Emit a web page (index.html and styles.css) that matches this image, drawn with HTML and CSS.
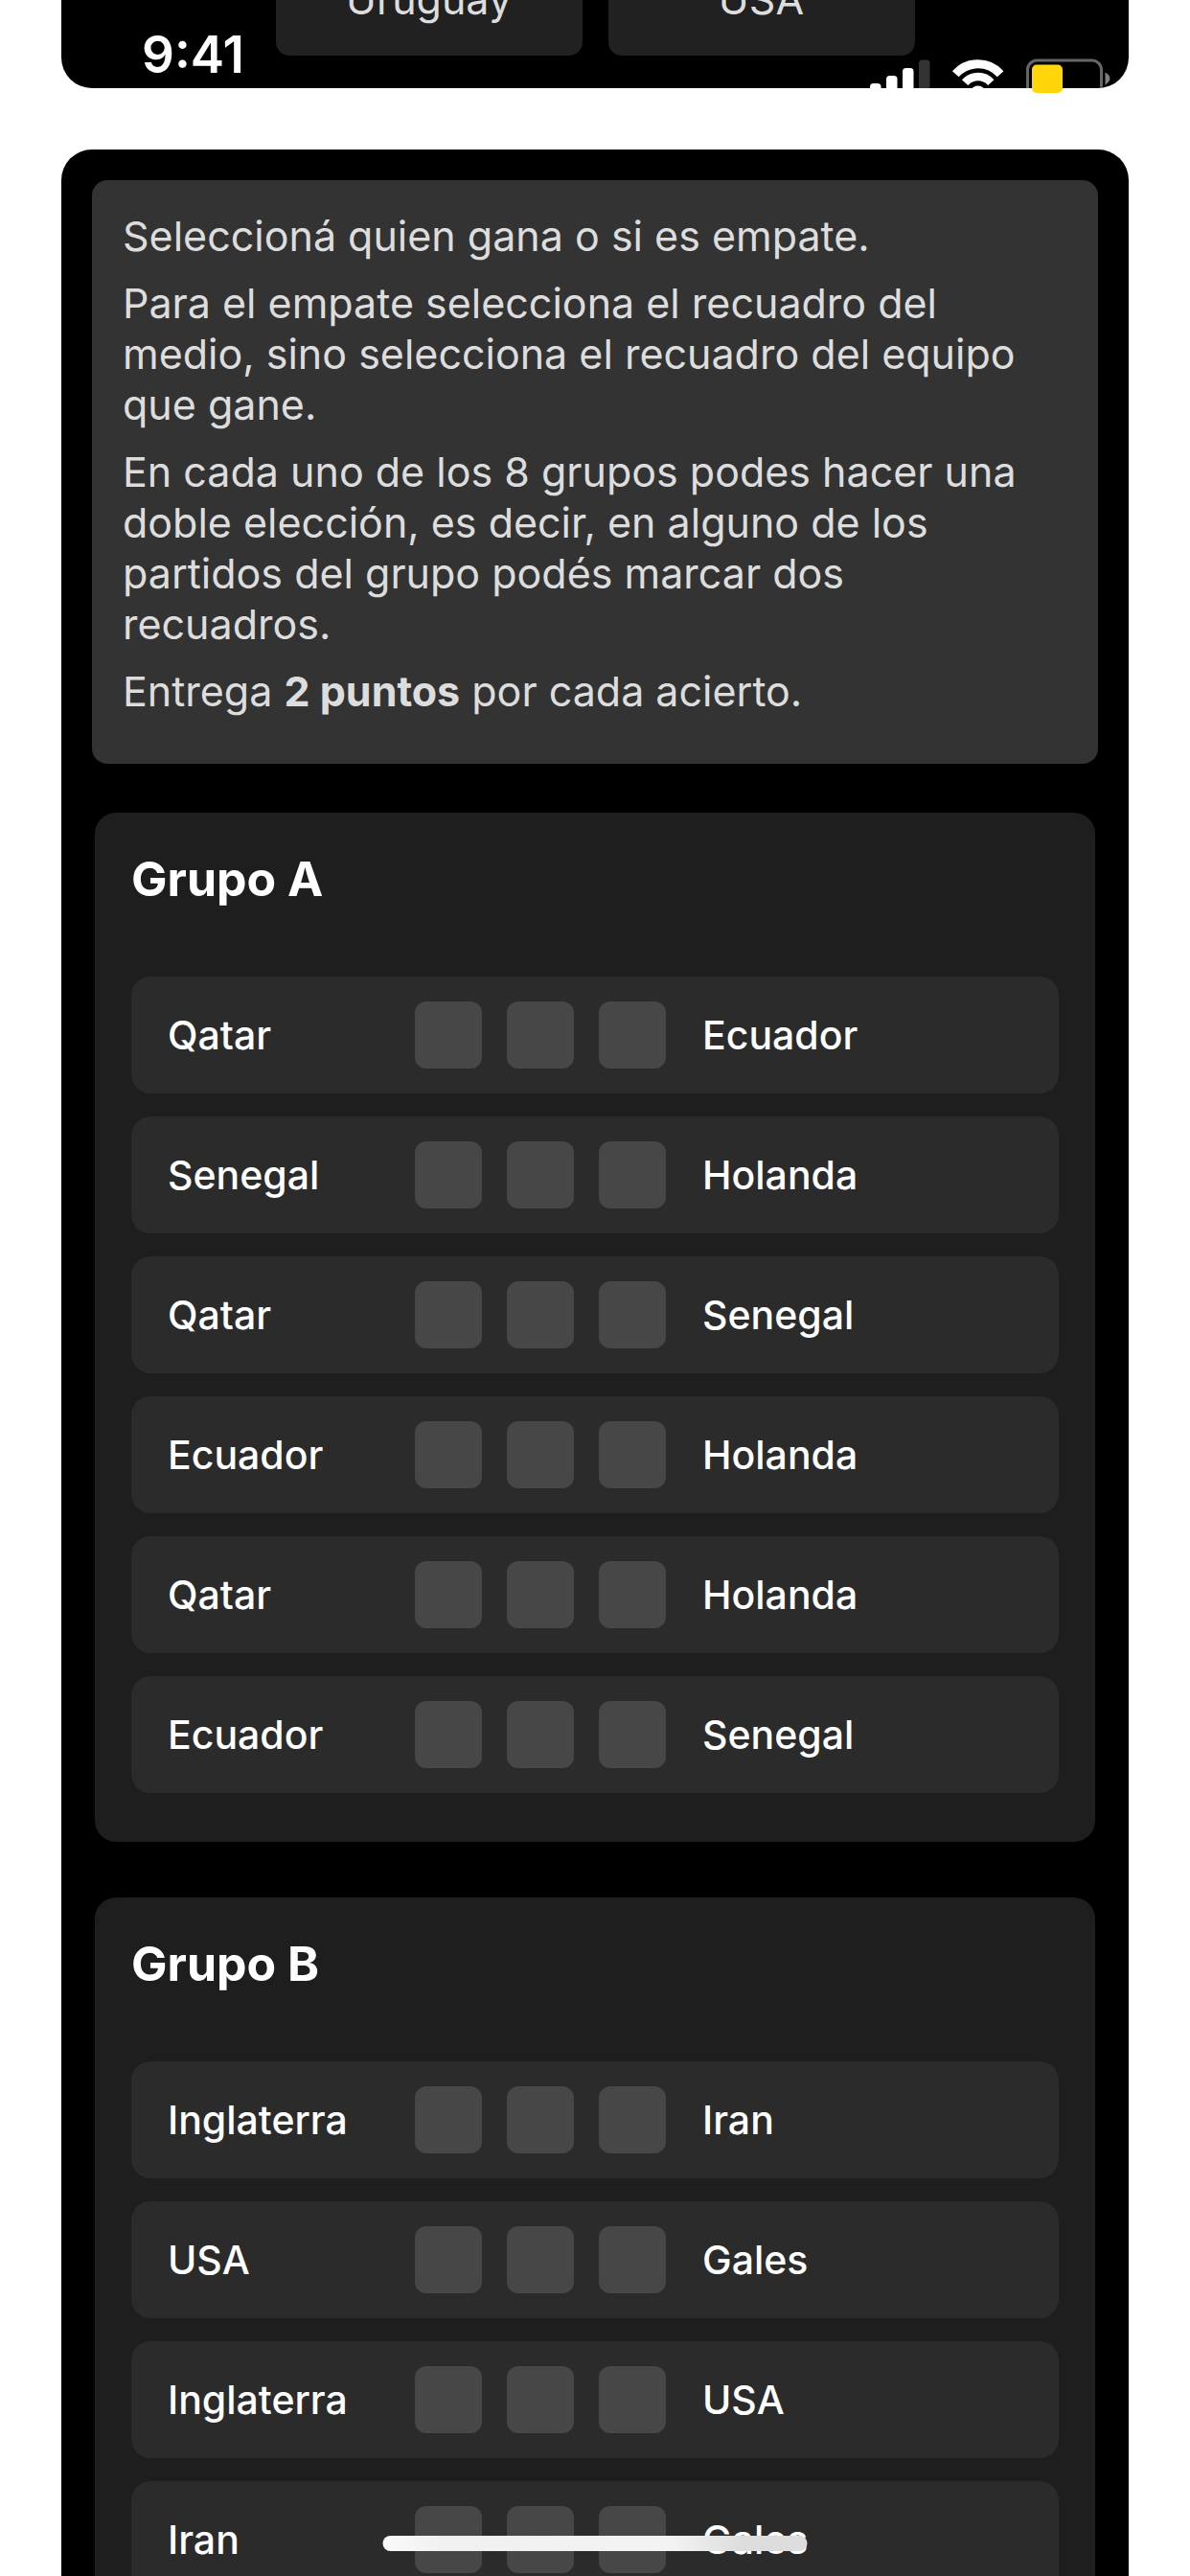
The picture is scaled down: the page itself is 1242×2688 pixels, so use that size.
FILE: index.html
```html
<!DOCTYPE html>
<html lang="es">

<head>
    <meta charset="UTF-8">
    <meta name="viewport" content="width=device-width, initial-scale=1.0">
    <title>Prode Mundial</title>
    <link rel="stylesheet" href="styles.css">
</head>

<body>
    <div class="status-bar">
        <span class="time">9:41</span>
        <svg class="status-icons" width="252" height="42" viewBox="0 0 252 42" aria-hidden="true">
            <clipPath id="panelEdge">
                <path d="M0 0H252V19Q248 30 236 31H0Z" />
            </clipPath>
            <g clip-path="url(#panelEdge)">
                <!-- signal -->
                <rect x="0" y="26" width="11.5" height="20" rx="3.5" fill="#fff" />
                <rect x="17" y="18" width="11.5" height="28" rx="3.5" fill="#fff" />
                <rect x="34" y="10" width="11.5" height="36" rx="3.5" fill="#fff" />
                <rect x="51" y="1.5" width="11.5" height="44" rx="3.5" fill="#333" />
                <!-- wifi -->
                <path d="M89.3 16.2A31.5 31.5 0 0 1 136.1 16.2" fill="none" stroke="#fff" stroke-width="9" />
                <path d="M99.1 25.1A18.3 18.3 0 0 1 126.3 25.1" fill="none" stroke="#fff" stroke-width="8.6" />
                <circle cx="112.7" cy="37.3" r="8.7" fill="#fff" />
                <!-- battery -->
                <rect x="164.5" y="2" width="77" height="40" rx="10" fill="none" stroke="#666" stroke-width="3" />
                <path d="M245.5 14.5Q250.5 17 250.5 21.5T245.5 28.5Z" fill="#808080" />
            </g>
            <rect x="169" y="6.5" width="32" height="29.5" rx="5" fill="#ffd60a" />
        </svg>
    </div>

    <header class="panel top-panel">
        <div class="team-card">Uruguay</div>
        <div class="team-card">USA</div>
    </header>

    <main class="panel main-panel">
        <div class="info">
            <p>Seleccioná quien gana o si es empate.</p>
            <p>Para el empate selecciona el recuadro del medio, sino selecciona el recuadro del equipo que gane.</p>
            <p>En cada uno de los 8 grupos podes hacer una doble elección, es decir, en alguno de los partidos del grupo podés marcar dos recuadros.</p>
            <p>Entrega <strong>2 puntos</strong> por cada acierto.</p>
        </div>

        <section class="group">
            <h2>Grupo A</h2>
            <div class="matches">
                <div class="match">
                    <span>Qatar</span>
                    <div class="options">
                        <input type="checkbox" aria-label="Gana Qatar">
                        <input type="checkbox" aria-label="Empate">
                        <input type="checkbox" aria-label="Gana Ecuador">
                    </div>
                    <span>Ecuador</span>
                </div>
                <div class="match">
                    <span>Senegal</span>
                    <div class="options">
                        <input type="checkbox" aria-label="Gana Senegal">
                        <input type="checkbox" aria-label="Empate">
                        <input type="checkbox" aria-label="Gana Holanda">
                    </div>
                    <span>Holanda</span>
                </div>
                <div class="match">
                    <span>Qatar</span>
                    <div class="options">
                        <input type="checkbox" aria-label="Gana Qatar">
                        <input type="checkbox" aria-label="Empate">
                        <input type="checkbox" aria-label="Gana Senegal">
                    </div>
                    <span>Senegal</span>
                </div>
                <div class="match">
                    <span>Ecuador</span>
                    <div class="options">
                        <input type="checkbox" aria-label="Gana Ecuador">
                        <input type="checkbox" aria-label="Empate">
                        <input type="checkbox" aria-label="Gana Holanda">
                    </div>
                    <span>Holanda</span>
                </div>
                <div class="match">
                    <span>Qatar</span>
                    <div class="options">
                        <input type="checkbox" aria-label="Gana Qatar">
                        <input type="checkbox" aria-label="Empate">
                        <input type="checkbox" aria-label="Gana Holanda">
                    </div>
                    <span>Holanda</span>
                </div>
                <div class="match">
                    <span>Ecuador</span>
                    <div class="options">
                        <input type="checkbox" aria-label="Gana Ecuador">
                        <input type="checkbox" aria-label="Empate">
                        <input type="checkbox" aria-label="Gana Senegal">
                    </div>
                    <span>Senegal</span>
                </div>
            </div>
        </section>

        <section class="group">
            <h2>Grupo B</h2>
            <div class="matches">
                <div class="match">
                    <span>Inglaterra</span>
                    <div class="options">
                        <input type="checkbox" aria-label="Gana Inglaterra">
                        <input type="checkbox" aria-label="Empate">
                        <input type="checkbox" aria-label="Gana Iran">
                    </div>
                    <span>Iran</span>
                </div>
                <div class="match">
                    <span>USA</span>
                    <div class="options">
                        <input type="checkbox" aria-label="Gana USA">
                        <input type="checkbox" aria-label="Empate">
                        <input type="checkbox" aria-label="Gana Gales">
                    </div>
                    <span>Gales</span>
                </div>
                <div class="match">
                    <span>Inglaterra</span>
                    <div class="options">
                        <input type="checkbox" aria-label="Gana Inglaterra">
                        <input type="checkbox" aria-label="Empate">
                        <input type="checkbox" aria-label="Gana USA">
                    </div>
                    <span>USA</span>
                </div>
                <div class="match">
                    <span>Iran</span>
                    <div class="options">
                        <input type="checkbox" aria-label="Gana Iran">
                        <input type="checkbox" aria-label="Empate">
                        <input type="checkbox" aria-label="Gana Gales">
                    </div>
                    <span>Gales</span>
                </div>
            </div>
        </section>
    </main>

    <div class="home-indicator"></div>
</body>

</html>
```

FILE: styles.css
```css
* {
    box-sizing: border-box;
}

body {
    font-family: Inter, 'Liberation Sans', sans-serif;
    background-color: #fff;
    color: #fff;
    margin: 0;
    height: 100vh;
    overflow: hidden;
}

.panel {
    background-color: #000;
    margin: 0 64px;
}

/* status bar floats over the page */
.status-bar {
    position: absolute;
    top: 0;
    left: 0;
    right: 0;
    display: flex;
    justify-content: space-between;
    padding: 25px 82px 0 148px;
}

.time {
    font-size: 53px;
    font-weight: 600;
    line-height: 64px;
}

.status-icons {
    margin-top: 36px;
}

.top-panel {
    display: flex;
    justify-content: center;
    align-items: flex-end;
    gap: 27px;
    height: 92px;
    padding-bottom: 34px;
    border-radius: 0 0 32px 32px;
    overflow: hidden;
}

.team-card {
    width: 320px;
    padding: 32px 0;
    background-color: #212121;
    border-radius: 0 0 14px 14px;
    color: #ddd;
    font-size: 43px;
    line-height: 53px;
    text-align: center;
}

.main-panel {
    margin-top: 64px;
    padding-top: 32px;
    border-radius: 32px 32px 0 0;
}

.info {
    margin: 0 32px 51px;
    padding: 32px 48px 32px 32px;
    background-color: #333;
    border-radius: 16px;
    color: #ddd;
    font-size: 43px;
    line-height: 53px;
}

.info p {
    margin: 0 0 17px;
}

.group {
    margin: 0 35px 58px;
    padding: 39px 38px 51px;
    background-color: #1e1e1e;
    border-radius: 22px;
}

.group h2 {
    margin: 0 0 72px;
    font-size: 50px;
    font-weight: 700;
    line-height: 60px;
}

.matches {
    display: flex;
    flex-direction: column;
    gap: 24px;
}

.match {
    display: grid;
    grid-template-columns: 220px auto 1fr;
    column-gap: 38px;
    align-items: center;
    padding: 26px 38px;
    background-color: #2b2b2b;
    border-radius: 20px;
    font-size: 41px;
    font-weight: 500;
    line-height: 50px;
}

.options {
    display: flex;
    gap: 26px;
}

.options input {
    appearance: none;
    width: 70px;
    height: 70px;
    margin: 0;
    background-color: #474747;
    border-radius: 12px;
    cursor: pointer;
}

.options input:checked {
    background-color: #ffd60a;
}

.home-indicator {
    position: absolute;
    bottom: 26px;
    left: 50%;
    width: 443px;
    height: 16px;
    transform: translateX(-50%);
    border-radius: 8px;
    background: linear-gradient(to right, #fafafa, #f0f0f0 15%, #f3f3f3 68%, #dcdcdc 85%);
}
```
